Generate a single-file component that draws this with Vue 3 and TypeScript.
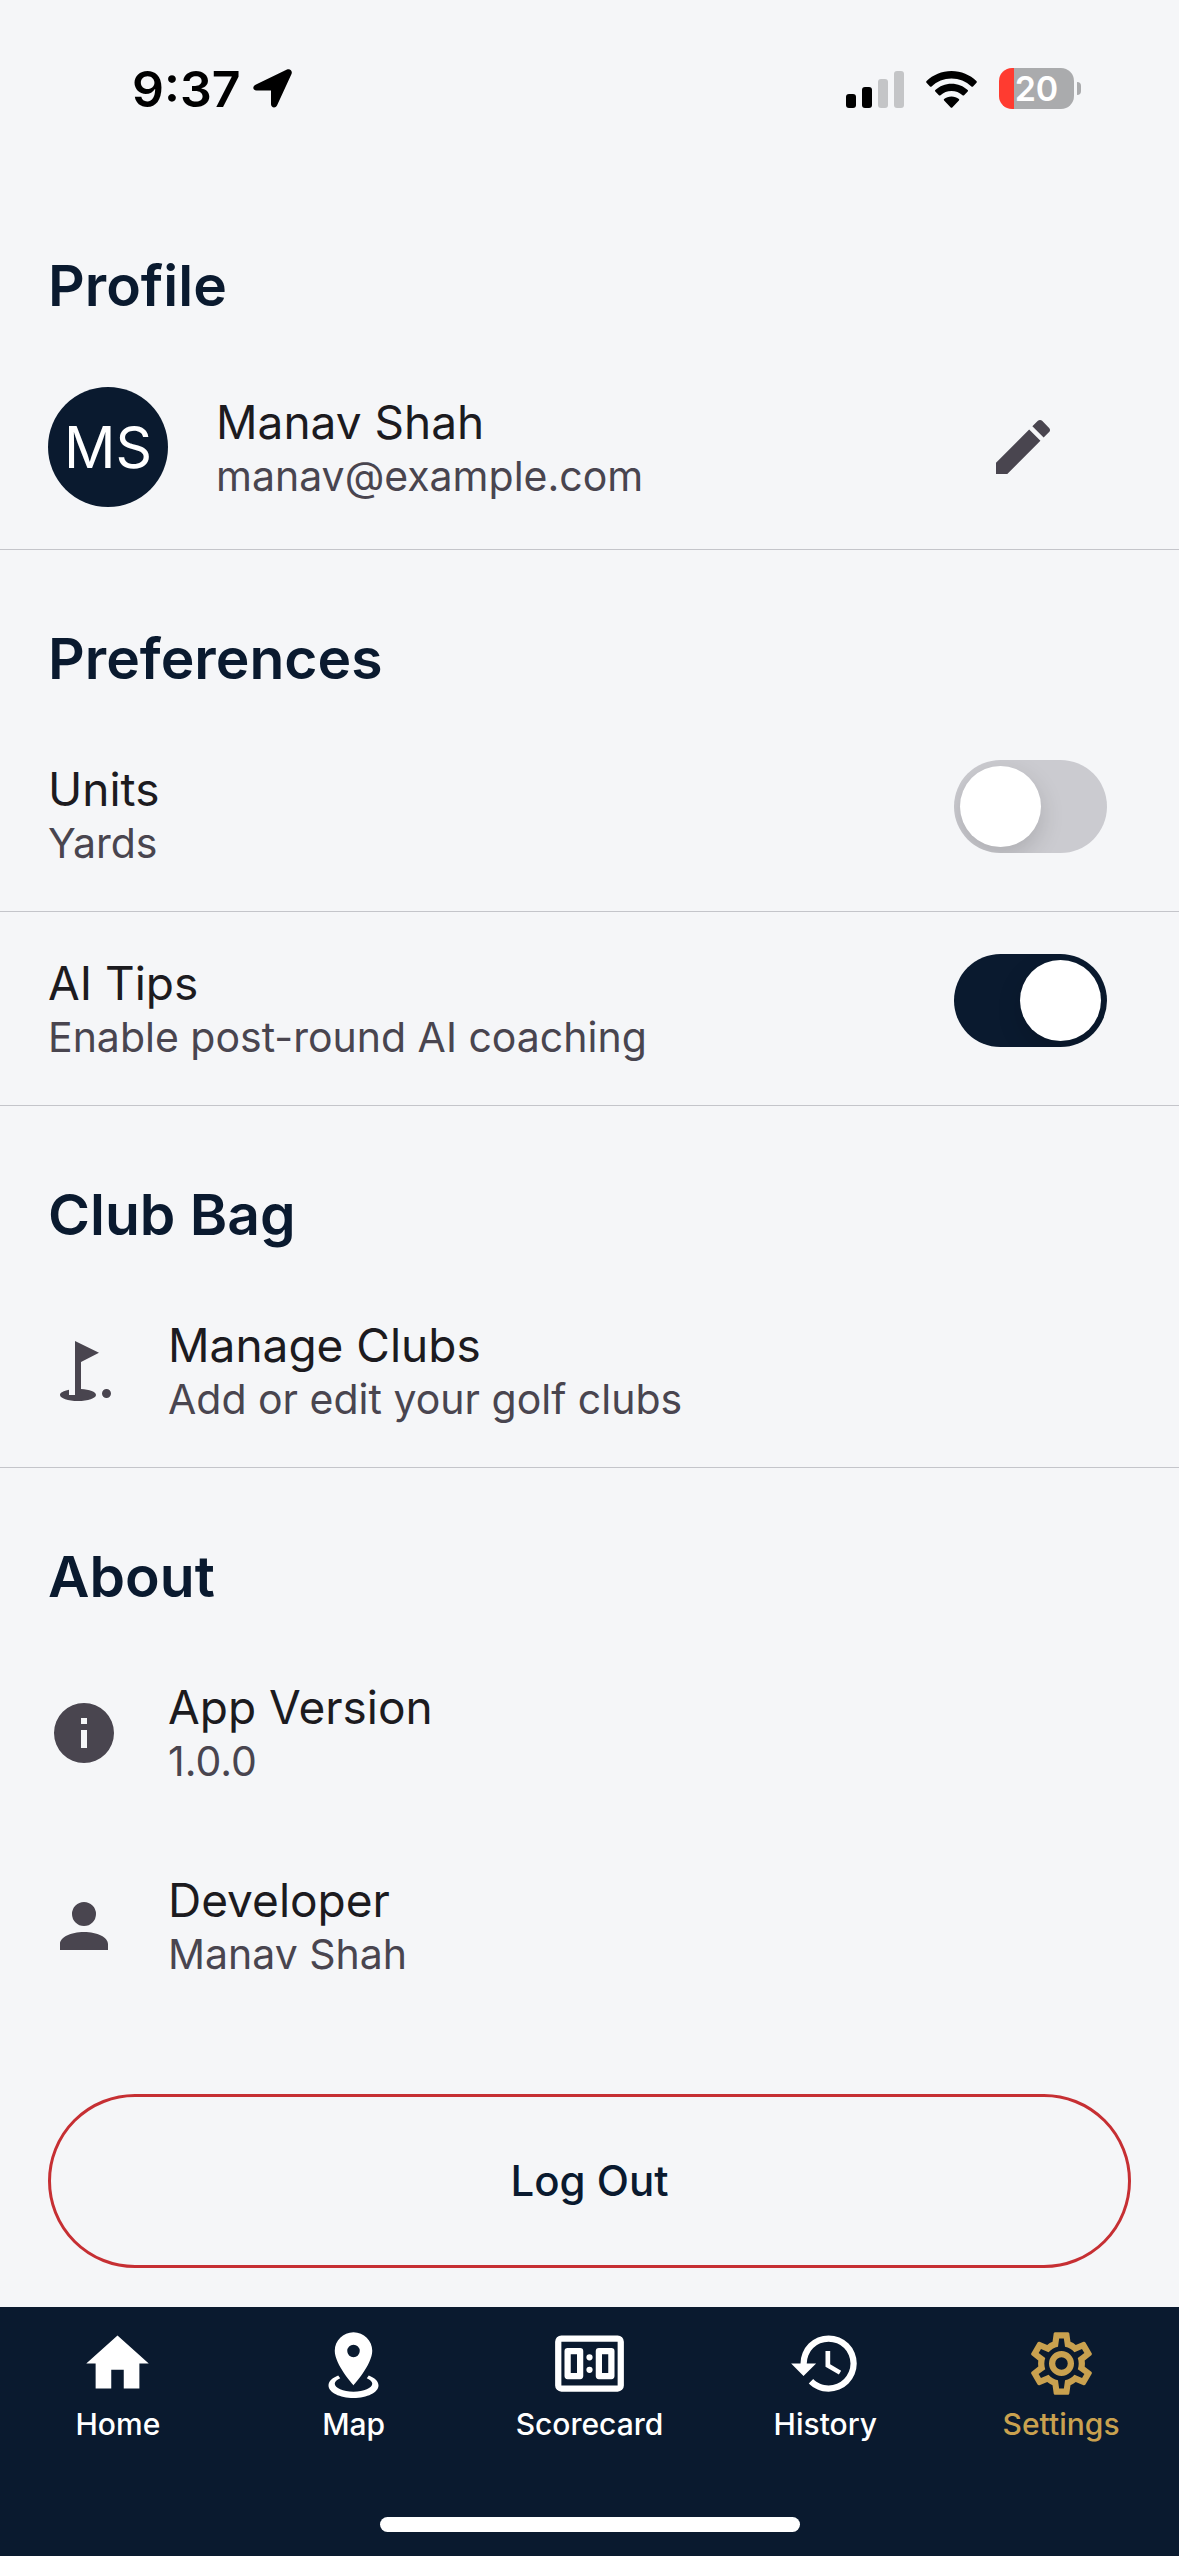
<script setup lang="ts">
import { ref } from 'vue'

interface InfoRow {
  title: string
  description: string
  icon: string
}

interface Tab {
  label: string
  icon: string
  active?: boolean
}

const metricUnits = ref(false)
const aiTips = ref(true)

const pencilIcon =
  'M20.71,7.04C21.1,6.65 21.1,6 20.71,5.63L18.37,3.29C18,2.9 17.35,2.9 16.96,3.29L15.12,5.12L18.87,8.87M3,17.25V21H6.75L17.81,9.93L14.06,6.18L3,17.25Z'
const golfIcon =
  'M19.5,18A1.5,1.5 0 0,1 21,19.5A1.5,1.5 0 0,1 19.5,21A1.5,1.5 0 0,1 18,19.5A1.5,1.5 0 0,1 19.5,18M17,5.92L11,9V18.03C13.84,18.19 16,19 16,20C16,21.1 13.31,22 10,22C6.69,22 4,21.1 4,20C4,19.26 5.21,18.62 7,18.27V20H9V2L17,5.92Z'

const aboutRows: InfoRow[] = [
  {
    title: 'App Version',
    description: '1.0.0',
    icon: 'M13,9H11V7H13M13,17H11V11H13M12,2A10,10 0 0,0 2,12A10,10 0 0,0 12,22A10,10 0 0,0 22,12A10,10 0 0,0 12,2Z',
  },
  {
    title: 'Developer',
    description: 'Manav Shah',
    icon: 'M12,4A4,4 0 0,1 16,8A4,4 0 0,1 12,12A4,4 0 0,1 8,8A4,4 0 0,1 12,4M12,14C16.42,14 20,15.79 20,18V20H4V18C4,15.79 7.58,14 12,14Z',
  },
]

const tabs: Tab[] = [
  { label: 'Home', icon: 'M10,20V14H14V20H19V12H22L12,3L2,12H5V20H10Z' },
  {
    label: 'Map',
    icon: 'M12,2C15.31,2 18,4.66 18,7.95C18,12.41 12,19 12,19C12,19 6,12.41 6,7.95C6,4.66 8.69,2 12,2M12,6A2,2 0 0,0 10,8A2,2 0 0,0 12,10A2,2 0 0,0 14,8A2,2 0 0,0 12,6M20,19C20,21.21 16.42,23 12,23C7.58,23 4,21.21 4,19C4,17.71 5.22,16.56 7.11,15.83L7.75,16.74C6.67,17.19 6,17.81 6,18.5C6,19.88 8.69,21 12,21C15.31,21 18,19.88 18,18.5C18,17.81 17.33,17.19 16.25,16.74L16.89,15.83C18.78,16.56 20,17.71 20,19Z',
  },
  {
    label: 'Scorecard',
    icon: 'M3,3H21A2,2 0 0,1 23,5V19A2,2 0 0,1 21,21H3A2,2 0 0,1 1,19V5A2,2 0 0,1 3,3M3,5V19H21V5H3M5,7H9A1,1 0 0,1 10,8V16A1,1 0 0,1 9,17H5A1,1 0 0,1 4,16V8A1,1 0 0,1 5,7M6,9V15H8V9H6M15,7H19A1,1 0 0,1 20,8V16A1,1 0 0,1 19,17H15A1,1 0 0,1 14,16V8A1,1 0 0,1 15,7M16,9V15H18V9H16M11,10A1,1 0 0,1 13,10A1,1 0 0,1 11,10M11,14A1,1 0 0,1 13,14A1,1 0 0,1 11,14Z',
  },
  {
    label: 'History',
    icon: 'M13.5,8H12V13L16.28,15.54L17,14.33L13.5,12.25V8M13,3A9,9 0 0,0 4,12H1L4.96,16.03L9,12H6A7,7 0 0,1 13,5A7,7 0 0,1 20,12A7,7 0 0,1 13,19C11.07,19 9.32,18.21 8.06,16.94L6.64,18.36C8.27,20 10.5,21 13,21A9,9 0 0,0 22,12A9,9 0 0,0 13,3',
  },
  {
    label: 'Settings',
    active: true,
    icon: 'M12,8A4,4 0 0,1 16,12A4,4 0 0,1 12,16A4,4 0 0,1 8,12A4,4 0 0,1 12,8M12,10A2,2 0 0,0 10,12A2,2 0 0,0 12,14A2,2 0 0,0 14,12A2,2 0 0,0 12,10M10,22C9.75,22 9.54,21.82 9.5,21.58L9.13,18.93C8.5,18.68 7.96,18.34 7.44,17.94L4.95,18.95C4.73,19.03 4.46,18.95 4.34,18.73L2.34,15.27C2.21,15.05 2.27,14.78 2.46,14.63L4.57,12.97L4.5,12L4.57,11L2.46,9.37C2.27,9.22 2.21,8.95 2.34,8.73L4.34,5.27C4.46,5.05 4.73,4.96 4.95,5.05L7.44,6.05C7.96,5.66 8.5,5.32 9.13,5.07L9.5,2.42C9.54,2.18 9.75,2 10,2H14C14.25,2 14.46,2.18 14.5,2.42L14.87,5.07C15.5,5.32 16.04,5.66 16.56,6.05L19.05,5.05C19.27,4.96 19.54,5.05 19.66,5.27L21.66,8.73C21.79,8.95 21.73,9.22 21.54,9.37L19.43,11L19.5,12L19.43,13L21.54,14.63C21.73,14.78 21.79,15.05 21.66,15.27L19.66,18.73C19.54,18.95 19.27,19.04 19.05,18.95L16.56,17.95C16.04,18.34 15.5,18.68 14.87,18.93L14.5,21.58C14.46,21.82 14.25,22 14,22H10M11.25,4L10.88,6.61C9.68,6.86 8.62,7.5 7.85,8.39L5.44,7.35L4.69,8.65L6.8,10.2C6.4,11.37 6.4,12.64 6.8,13.8L4.68,15.36L5.43,16.66L7.86,15.62C8.63,16.5 9.68,17.14 10.87,17.38L11.24,20H12.76L13.13,17.39C14.32,17.14 15.37,16.5 16.14,15.62L18.57,16.66L19.32,15.36L17.2,13.81C17.6,12.64 17.6,11.37 17.2,10.2L19.31,8.65L18.56,7.35L16.15,8.39C15.38,7.5 14.32,6.86 13.12,6.62L12.75,4H11.25Z',
  },
]
</script>

<template>
  <div class="screen">
    <header class="status">
      <div class="clock">
        <span>9:37</span>
        <svg class="arrow" viewBox="0 0 39 39" aria-hidden="true">
          <path d="M3 15.4 34 .5C37-.8 39.8 1.800 38.500 5L24 36.500C22.600 39.500 18 38.800 18 35.300V21.500H3.500C-.3 21.500-1 17.200 3 15.400Z" />
        </svg>
      </div>
      <div class="indicators">
        <svg class="signal" viewBox="0 0 58 38" aria-hidden="true">
          <rect x="0" y="24" width="10" height="14" rx="3" />
          <rect x="16" y="17" width="10" height="21" rx="3" />
          <rect class="dim" x="32" y="9" width="10" height="29" rx="3" />
          <rect class="dim" x="48" y="1" width="10" height="37" rx="3" />
        </svg>
        <svg class="wifi" viewBox="0 0 51 38" aria-hidden="true">
          <path d="M25.500 1C35.300 1 44 4.800 50.400 11.100 51 11.700 51 12.300 50.500 12.800L47 16.400C46.500 16.900 45.900 16.900 45.400 16.400 40 11.300 33.100 8.400 25.500 8.400S11 11.300 5.600 16.400C5.100 16.900 4.500 16.900 4 16.400L.5 12.800C0 12.300 0 11.700.6 11.100 7 4.800 15.700 1 25.500 1Z" />
          <path d="M25.500 13.700C31.800 13.700 37.400 16 41.700 20 42.200 20.500 42.200 21 41.700 21.500L38.100 25.200C37.600 25.700 37.100 25.700 36.500 25.200 33.500 22.500 29.700 21 25.500 21S17.500 22.500 14.500 25.200C13.900 25.700 13.400 25.700 12.900 25.200L9.300 21.500C8.800 21 8.800 20.500 9.300 20 13.600 16 19.200 13.700 25.500 13.700Z" />
          <path d="M25.500 26.500C28.300 26.500 30.900 27.500 32.900 29.100 33.400 29.600 33.400 30.100 32.900 30.600L26.500 37.200C25.800 37.900 25.200 37.900 24.500 37.200L18.100 30.600C17.600 30.100 17.600 29.600 18.100 29.100 20.100 27.500 22.700 26.500 25.500 26.500Z" />
        </svg>
        <div class="battery">
          <div class="cell"><span>20</span></div>
          <div class="nub"></div>
        </div>
      </div>
    </header>

    <main>
      <section>
        <h2>Profile</h2>
        <div class="row ruled">
          <div class="avatar">MS</div>
          <div class="text">
            <p class="title">Manav Shah</p>
            <p class="description">manav@example.com</p>
          </div>
          <button class="edit" type="button" aria-label="Edit profile">
            <svg class="icon" viewBox="0 0 24 24" aria-hidden="true"><path :d="pencilIcon" /></svg>
          </button>
        </div>
      </section>

      <section>
        <h2>Preferences</h2>
        <div class="row ruled top">
          <label class="text" for="units">
            <span class="title">Units</span>
            <span class="description">Yards</span>
          </label>
          <input id="units" v-model="metricUnits" class="switch" type="checkbox" role="switch" />
        </div>
        <div class="row ruled top">
          <label class="text" for="ai-tips">
            <span class="title">AI Tips</span>
            <span class="description">Enable post-round AI coaching</span>
          </label>
          <input id="ai-tips" v-model="aiTips" class="switch" type="checkbox" role="switch" />
        </div>
      </section>

      <section>
        <h2>Club Bag</h2>
        <a class="row ruled" href="#clubs">
          <svg class="icon" viewBox="0 0 24 24" aria-hidden="true"><path :d="golfIcon" /></svg>
          <span class="text">
            <span class="title">Manage Clubs</span>
            <span class="description">Add or edit your golf clubs</span>
          </span>
        </a>
      </section>

      <section>
        <h2>About</h2>
        <div v-for="row in aboutRows" :key="row.title" class="row">
          <svg class="icon" viewBox="0 0 24 24" aria-hidden="true"><path :d="row.icon" /></svg>
          <div class="text">
            <p class="title">{{ row.title }}</p>
            <p class="description">{{ row.description }}</p>
          </div>
        </div>
      </section>

      <button class="logout" type="button">Log Out</button>
    </main>

    <footer>
      <nav>
        <a
          v-for="tab in tabs"
          :key="tab.label"
          class="tab"
          :class="{ active: tab.active }"
          :href="'#' + tab.label.toLowerCase()"
        >
          <svg viewBox="0 0 24 24" aria-hidden="true"><path fill-rule="evenodd" :d="tab.icon" /></svg>
          <span>{{ tab.label }}</span>
        </a>
      </nav>
      <div class="home-bar"></div>
    </footer>
  </div>
</template>

<style>
body {
  margin: 0;
  background: #f5f6f8;
}
</style>

<style scoped>
.screen {
  display: flex;
  flex-direction: column;
  min-height: 100vh;
  background: #f5f6f8;
  color: #1c1b1f;
  font-family: Inter, 'Liberation Sans', sans-serif;
}

svg {
  display: block;
  flex: none;
  fill: currentColor;
}

h2,
p {
  margin: 0;
}

.status {
  display: flex;
  align-items: center;
  justify-content: space-between;
  height: 177px;
  padding: 0 98px 0 132px;
  color: #000;
}

.clock {
  display: flex;
  align-items: center;
  gap: 12px;
  font-size: 50px;
  font-weight: 600;
  line-height: 60px;
}

.arrow {
  width: 39px;
  height: 39px;
}

.indicators {
  display: flex;
  align-items: center;
  gap: 22px;
}

.signal {
  width: 58px;
  height: 38px;
}

.dim {
  fill: #c4c5c7;
}

.wifi {
  width: 51px;
  height: 38px;
}

.battery {
  display: flex;
  align-items: center;
  gap: 3px;
}

.cell {
  display: flex;
  align-items: center;
  justify-content: center;
  width: 75px;
  height: 41px;
  border-radius: 13px;
  background: linear-gradient(to right, #ff3b30 20%, #aaabad 20%);
  color: #fff;
  font-size: 34px;
  font-weight: 600;
}

.nub {
  width: 4px;
  height: 13px;
  border-radius: 0 6px 6px 0;
  background: #aaabad;
}

main {
  flex: 1;
}

h2 {
  padding: 72px 48px 22px;
  color: #0a1a2f;
  font-size: 57px;
  font-weight: 600;
  line-height: 74px;
}

.row {
  display: flex;
  align-items: center;
  padding: 42px 72px 42px 48px;
  color: inherit;
  text-decoration: none;
}

.row.top {
  align-items: flex-start;
}

.ruled {
  border-bottom: 1px solid #c4c5ca;
}

.text {
  flex: 1;
  min-width: 0;
}

.avatar + .text,
.icon + .text {
  margin-left: 48px;
}

.title,
.description {
  display: block;
}

.title {
  font-size: 46px;
  line-height: 58px;
}

.description {
  color: #49454f;
  font-size: 41px;
  line-height: 51px;
}

.avatar {
  display: flex;
  align-items: center;
  justify-content: center;
  width: 120px;
  height: 120px;
  border-radius: 50%;
  background: #0a1a2f;
  color: #fff;
  font-size: 57px;
}

.icon {
  width: 72px;
  height: 72px;
  color: #49454f;
}

.edit {
  margin: 0 24px 0 0;
  padding: 24px;
  border: 0;
  background: none;
}

.switch {
  width: 153px;
  height: 93px;
  margin: 0;
  padding: 6px;
  box-sizing: border-box;
  border-radius: 48px;
  appearance: none;
  background: #cbcbd0;
  overflow: hidden;
}

.switch::before {
  display: block;
  width: 81px;
  height: 81px;
  border-radius: 50%;
  background: #fff;
  box-shadow: 0 9px 24px rgba(0, 0, 0, 0.15);
  content: '';
}

.switch:checked {
  background: #0a1a2f;
}

.switch:checked::before {
  margin-left: auto;
}

.logout {
  display: block;
  width: calc(100% - 96px);
  height: 174px;
  margin: 72px 48px 39px;
  border: 3px solid #c62f33;
  border-radius: 87px;
  background: none;
  color: #0a1a2f;
  font: 500 42px / 60px Inter, 'Liberation Sans', sans-serif;
}

footer {
  padding: 19px 0 24px;
  background: #0a1a2f;
}

nav {
  display: flex;
}

.tab {
  display: flex;
  flex: 1;
  flex-direction: column;
  align-items: center;
  gap: 5px;
  color: #fff;
  font-size: 30px;
  font-weight: 500;
  line-height: 36px;
  text-decoration: none;
}

.tab svg {
  width: 75px;
  height: 75px;
}

.tab.active {
  color: #c9a14f;
}

.home-bar {
  width: 420px;
  height: 15px;
  margin: 75px auto 0;
  border-radius: 8px;
  background: #fff;
}
</style>
